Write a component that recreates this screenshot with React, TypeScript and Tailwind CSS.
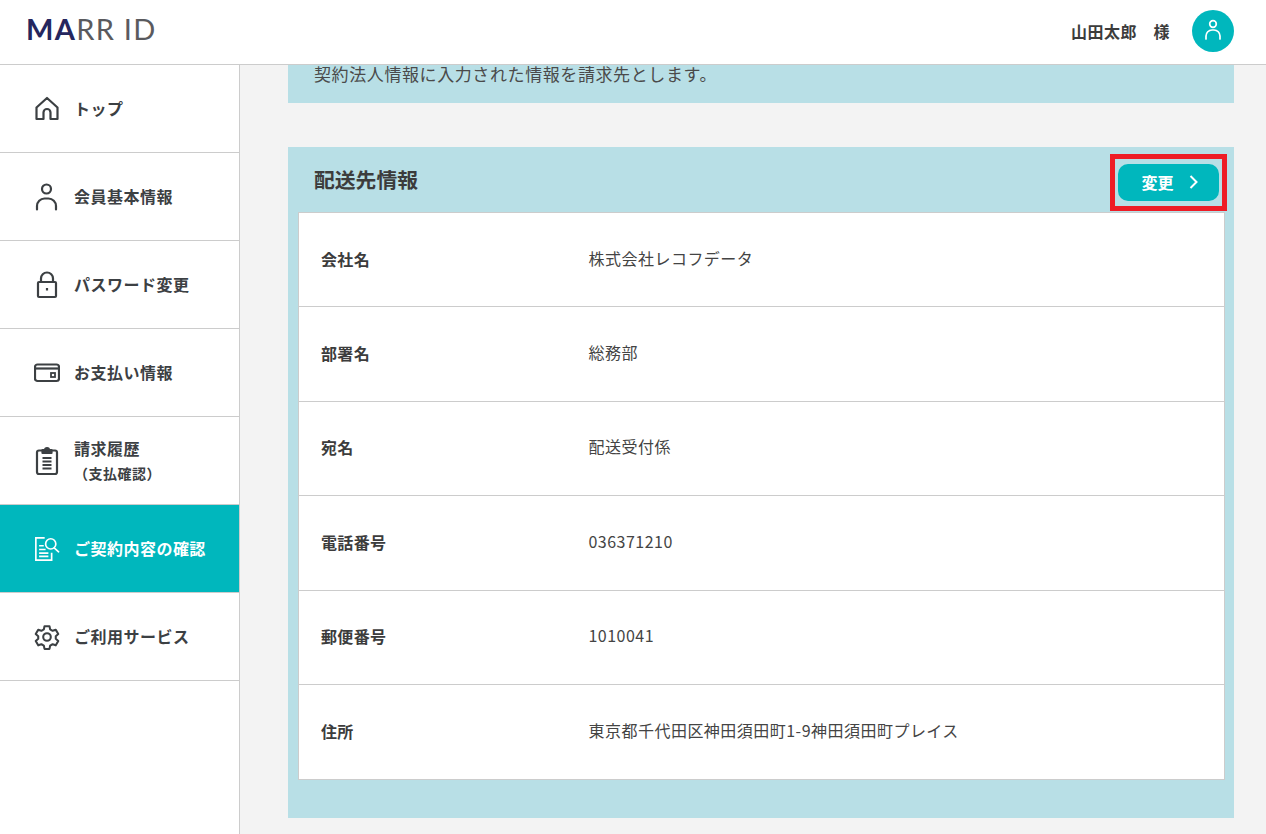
import React from 'react';

const font = "font-['Noto_Sans_CJK_JP','Noto_Sans',sans-serif]";

const HomeIcon = () => (
  <svg width="26" height="26" viewBox="0 0 26 26" fill="none" stroke="currentColor" strokeWidth="2.200" strokeLinejoin="round">
    <path d="M2.500 11.500 13 2l10.500 9.500V23h-7V16.500a3.500 3.500 0 0 0-7 0V23h-7z" />
  </svg>
);

const UserIcon = () => (
  <svg width="26" height="30" viewBox="0 0 26 30" fill="none" stroke="currentColor" strokeWidth="2.200" strokeLinecap="round">
    <circle cx="12.500" cy="7" r="4.500" />
    <path d="M3 27.500V24a7.500 7.500 0 0 1 7.500-7.500h4A7.500 7.500 0 0 1 22 24v3.500" />
  </svg>
);

const LockIcon = () => (
  <svg width="24" height="28" viewBox="0 0 24 28" fill="none" stroke="currentColor" strokeWidth="2.200">
    <path d="M6 11V7.500a6 6 0 0 1 12 0V11" />
    <rect x="3" y="11" width="18" height="15" rx="1" />
    <path d="M12 17v2.500" />
  </svg>
);

const WalletIcon = () => (
  <svg width="26" height="20" viewBox="0 0 26 20" fill="none" stroke="currentColor" strokeWidth="2.200">
    <rect x="1" y="1.500" width="24" height="16.500" rx="2.500" />
    <path d="M1 5.500h24" />
    <rect x="17" y="10" width="4" height="4" strokeWidth="1.800" />
  </svg>
);

const ClipboardIcon = () => (
  <svg width="24" height="30" viewBox="0 0 24 30" fill="none" stroke="currentColor" strokeWidth="2.200" strokeLinejoin="round">
    <path d="M7.500 4.500H4a2 2 0 0 0-2 2V26a2 2 0 0 0 2 2h16a2 2 0 0 0 2-2V6.500a2 2 0 0 0-2-2h-3.500" />
    <path d="M7.500 7V4h2.500a2 2 0 0 1 4 0h2.500V7z" fill="currentColor" />
    <path d="M7.500 12h9M7.500 15.500h9M7.500 19h9M7.500 22.500h9" strokeWidth="1.800" />
  </svg>
);

const ContractIcon = () => (
  <svg width="28" height="26" viewBox="0 0 28 26" fill="none" stroke="currentColor" strokeWidth="1.800">
    <path d="M11.500 1H2v24h17v-8" />
    <path d="M5.500 9.500h5M5.500 13.500h7M5.500 17.500h10M5.500 21h10" />
    <circle cx="18" cy="7.500" r="5.500" />
    <path d="m22 12 4.500 4" strokeLinecap="round" />
  </svg>
);

const GearIcon = () => (
  <svg width="26" height="26" viewBox="0 0 24 24" fill="none" stroke="currentColor" strokeWidth="1.900" strokeLinejoin="round">
    <path d="M9.700 2h4.600l.6 3 2.300 1.300 2.900-1 2.300 4-2.300 2v2.400l2.300 2-2.300 4-2.900-1-2.300 1.300-.6 3H9.700l-.6-3-2.300-1.300-2.900 1-2.300-4 2.300-2v-2.400l-2.300-2 2.300-4 2.900 1L9.100 5z" />
    <circle cx="12" cy="12" r="3.500" />
  </svg>
);

const navItems = [
  { icon: <HomeIcon />, label: 'トップ' },
  { icon: <UserIcon />, label: '会員基本情報' },
  { icon: <LockIcon />, label: 'パスワード変更' },
  { icon: <WalletIcon />, label: 'お支払い情報' },
  { icon: <ClipboardIcon />, label: '請求履歴', sub: '（支払確認）' },
  { icon: <ContractIcon />, label: 'ご契約内容の確認', active: true },
  { icon: <GearIcon />, label: 'ご利用サービス' },
];

const rows = [
  ['会社名', '株式会社レコフデータ'],
  ['部署名', '総務部'],
  ['宛名', '配送受付係'],
  ['電話番号', '036371210'],
  ['郵便番号', '1010041'],
  ['住所', '東京都千代田区神田須田町1-9神田須田町プレイス'],
];

export default function App() {
  return (
    <div className={`${font} h-screen flex flex-col overflow-hidden bg-[#f3f3f3] text-[#3c3c3c]`}>
      {/* Header */}
      <header className="flex-none h-[65px] bg-white border-b border-[#cccccc] flex items-center justify-between pl-[26px] pr-[32px] pb-[3px]">
        <div className="font-['Lato',sans-serif] text-[29px] leading-none tracking-[0.045em] text-[#5a5a5e] font-normal mb-[5px]">
          <span className="font-bold text-[#25265e]">MA</span>RR ID
        </div>
        <div className="flex items-center gap-[22px]">
          <span className="text-[16px] font-bold tracking-[0.03em]">山田太郎　様</span>
          <div className="w-[42px] h-[42px] rounded-full bg-[#00b7bd] flex items-center justify-center text-white">
            <svg width="20" height="24" viewBox="0 0 20 24" fill="none" stroke="currentColor" strokeWidth="1.700" strokeLinecap="round">
              <circle cx="10" cy="5" r="3.300" />
              <path d="M3 20v-3a6 6 0 0 1 6-6h2a6 6 0 0 1 6 6v3" />
            </svg>
          </div>
        </div>
      </header>

      <div className="flex-1 flex min-h-0">
        {/* Sidebar */}
        <nav className="flex-none w-[240px] bg-white border-r border-[#cccccc]">
          {navItems.map((item) => (
            <div
              key={item.label}
              className={`h-[88px] flex items-center border-b border-[#cccccc] pl-[34px] ${
                item.active ? 'bg-[#00b7bd] text-white' : 'text-[#3c4043]'
              }`}
            >
              <div className="w-[26px] flex justify-center flex-none">{item.icon}</div>
              <div className="ml-[14px] text-[16px] font-bold tracking-[0.03em] leading-[25px]">
                <div>{item.label}</div>
                {item.sub && <div className="text-[14px]">{item.sub}</div>}
              </div>
            </div>
          ))}
        </nav>

        {/* Main */}
        <main className="flex-1 min-w-0 overflow-hidden pl-[48px] pr-[32px]">
          <div className="h-[38px] bg-[#b8dfe6] px-[26px]">
            <p className="text-[17px] leading-[17px] tracking-[0.035em] text-[#4a4a4a]">契約法人情報に入力された情報を請求先とします。</p>
          </div>

          <section className="mt-[44px] h-[671px] bg-[#b8dfe6] pl-[10px] pr-[9px] pt-[7px]">
            <div className="h-[58px] flex items-start justify-between -mr-[2px]">
              <h2 className="pl-[16px] pt-[8px] text-[20.800px] font-bold leading-[34px]">配送先情報</h2>
              <div className="border-[5px] border-[#ee1c25] px-[3px] py-[5px]">
                <button className="w-[101px] h-[37px] rounded-[10px] bg-[#00b7bd] text-white text-[16px] font-bold flex items-center justify-center gap-[15px] pb-[2px] pl-[2px]">
                  変更
                  <svg width="9" height="14" viewBox="0 0 9 14" fill="none" stroke="currentColor" strokeWidth="2">
                    <path d="m1.500 1 6 6-6 6" />
                  </svg>
                </button>
              </div>
            </div>
            <div className="h-[568px] bg-white border border-[#cccccc] flex flex-col">
              {rows.map(([label, value]) => (
                <div key={label} className="h-[94.400px] flex-none last:flex-1 flex items-center border-b border-[#cccccc] last:border-b-0 px-[22px] pb-[2px]">
                  <div className="w-[267.500px] flex-none text-[16px] font-bold tracking-[0.02em]">{label}</div>
                  <div className="text-[16px] tracking-[0.03em] -translate-y-[1px] text-[#444444]">{value}</div>
                </div>
              ))}
            </div>
          </section>
        </main>
      </div>
    </div>
  );
}
